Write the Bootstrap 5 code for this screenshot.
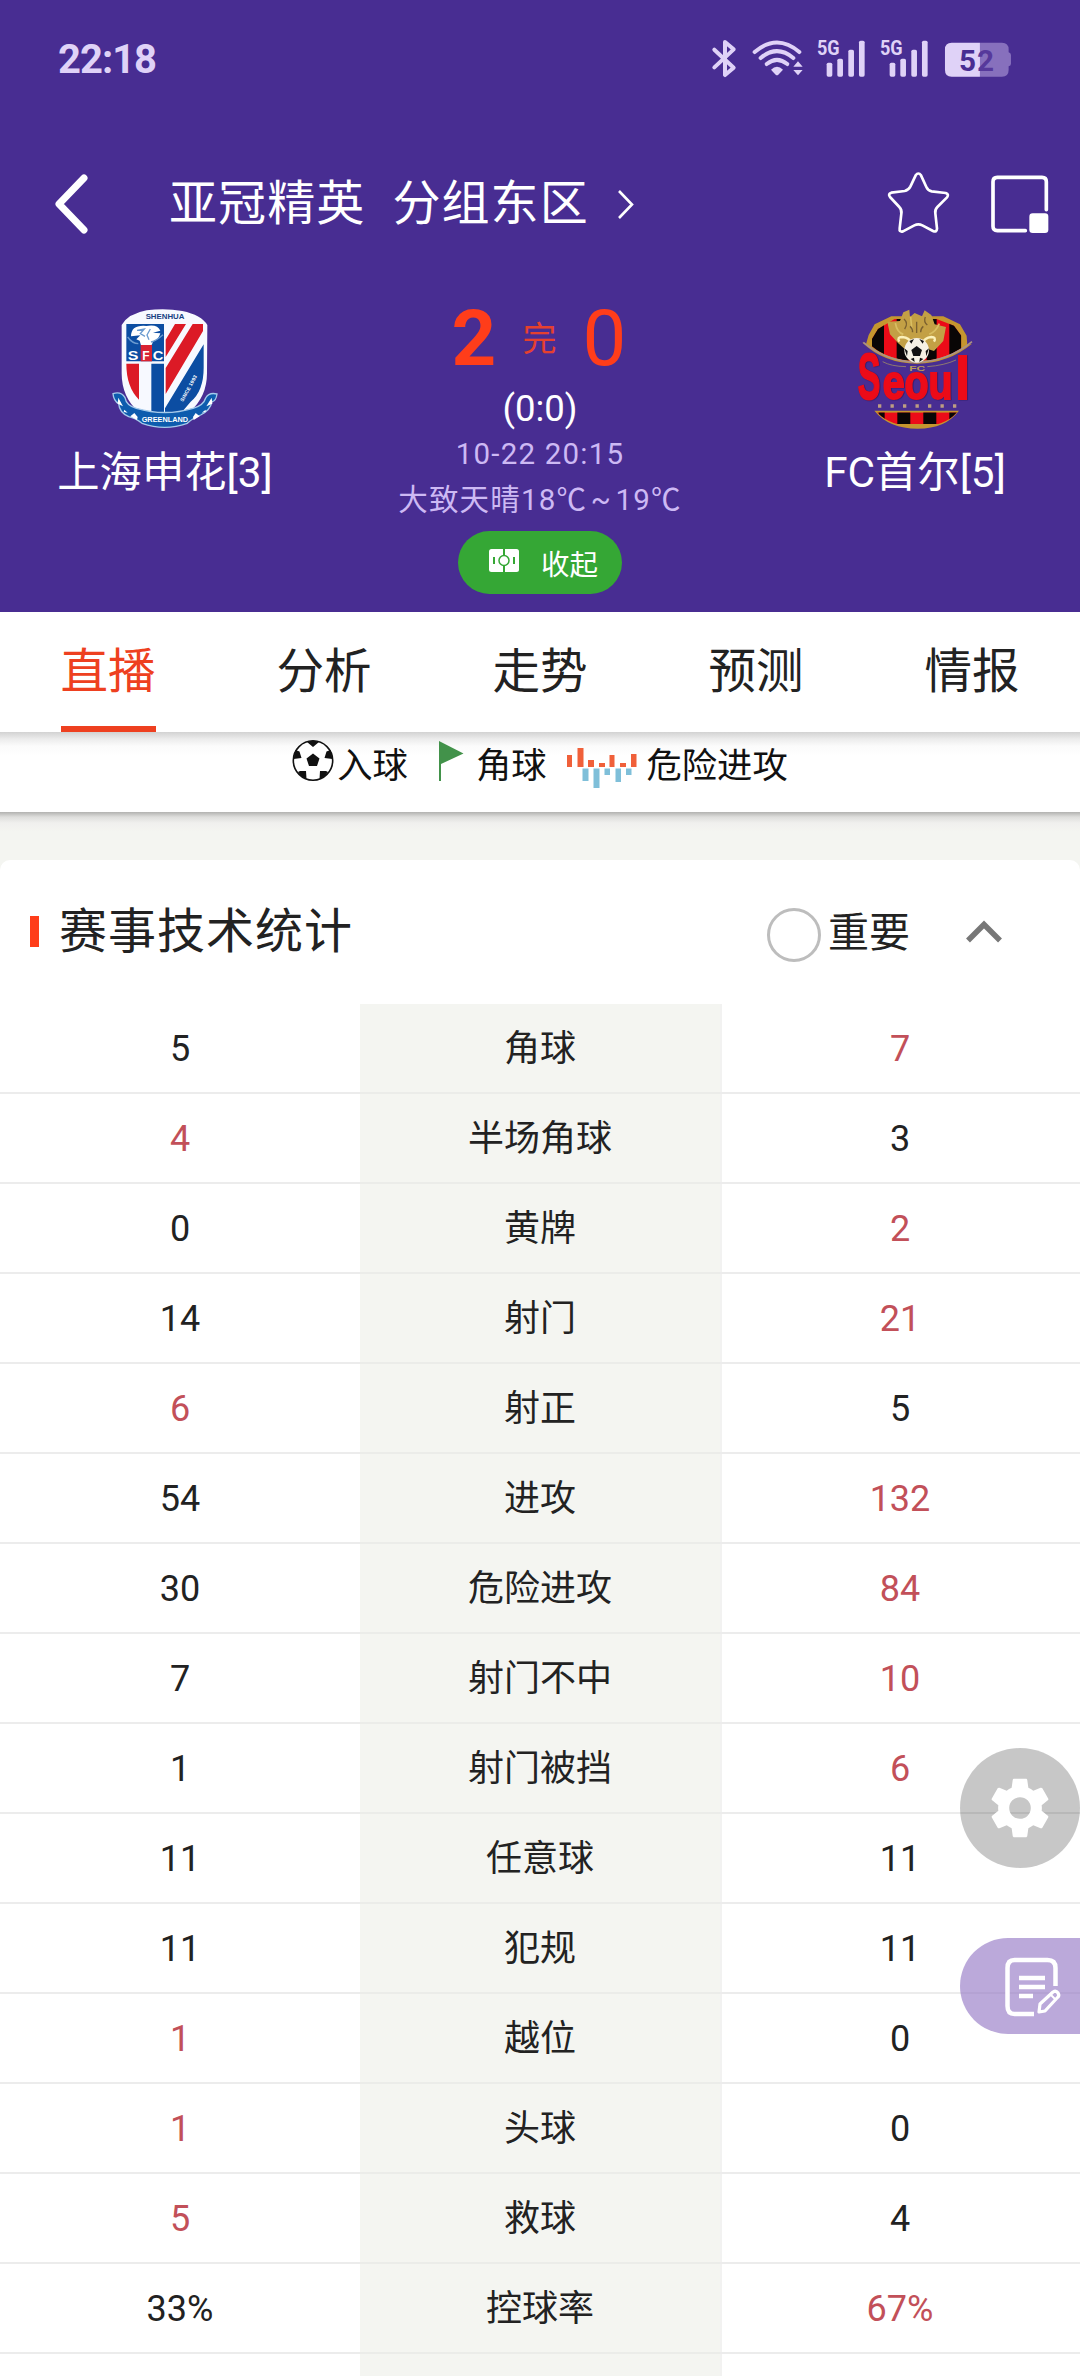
<!DOCTYPE html>
<html lang="zh-CN">
<head>
    <meta charset="UTF-8">
    <meta name="viewport" content="width=device-width, initial-scale=1.0">
    <title>上海申花 - FC首尔</title>
    <link href="https://cdn.jsdelivr.net/npm/bootstrap@5.3.0/dist/css/bootstrap.min.css" rel="stylesheet">
    <style>
        body { font-family: Roboto, "Noto Sans CJK SC", sans-serif; color: #222; background: #fff; width: 1080px; height: 2376px; }
        svg { display: block; flex: none; overflow: visible; }

        .match-header { background: #482d92; height: 612px; }
        .status-bar { height: 120px; padding: 38px 66px 0 58px; color: #dfd2f7; }
        .clock { font-size: 40px; line-height: 43px; font-weight: 700; letter-spacing: -1px; }
        .title-bar { height: 170px; padding: 48px 26px 0 55px; }
        .league { font-size: 48px; line-height: 72px; letter-spacing: 1.1px; margin-left: 78px; gap: 27px; }
        .pip-icon { margin-left: 36px; }
        .team { width: 330px; padding-top: 19px; }
        .team-name { font-size: 42.3px; line-height: 60px; margin-top: 14px; }
        .score-line { height: 96px; color: #ff3d1a; font-size: 78px; line-height: 98px; }
        .score-line b { width: 46px; }
        .score-line i { width: 46px; font-style: normal; }
        .state { font-size: 34px; color: #e5402f; margin: 0 26px 0 25px; }
        .half { font-size: 36.5px; line-height: 45px; }
        .meta { font-size: 29.5px; color: #cdb9f4; letter-spacing: 1.2px; line-height: 46px; white-space: nowrap; }
        .weather { word-spacing: -5px; }
        .fold-btn { width: 164px; height: 63px; background: #35a735; font-size: 28.5px; line-height: 63px; margin-top: 8px; padding: 6px 0 0 31px; gap: 22px; }
        .fold-btn svg { margin-top: -10px; }

        .tab-item { font-size: 47.5px; line-height: 120px; height: 120px; }
        .tab-item span { display: inline-block; height: 120px; }
        .tab-item.current span { color: #ee4020; border-bottom: 6px solid #ee4020; }
        .tabs-row { height: 120px; }
        .legend { height: 80px; font-size: 35.3px; line-height: 69px; color: #111; background: linear-gradient(#d2d2d2 0, #ececec 7px, #fbfbfb 14px, #fff 24px); }
        .ball-icon { margin-right: 3px; }
        .flag-icon { margin: 0 12px 0 31px; }
        .bars-icon { margin: 0 9px 0 19px; }
        .spacer { height: 48px; background: linear-gradient(#b2b2b0 0, #dededc 5px, #f0f0ee 11px, #f4f5f1 20px); }

        .stats-wrap { background: #f4f5f1; }
        .stats-panel { background: #fff; border-radius: 10px 10px 0 0; }
        .stats-head { height: 144px; padding: 0 77px 3px 30px; }
        .red-bar { width: 9px; height: 31px; background: #ff3d1a; margin-top: 2px; }
        .stats-title { font-size: 48px; letter-spacing: 1px; margin: 3px 0 0 20px; }
        .radio-ring { width: 54px; height: 54px; border: 3px solid #bdbdbd; margin-right: 7px; }
        .filter-label { font-size: 41px; margin: 7px 55px 0 0; }
        .stat-line { height: 90px; font-size: 36px; line-height: 90px; text-align: center; }
        .stat-line > div { height: 90px; box-shadow: inset 0 -2px #ececec; }
        .stat-line .stat-name { background: #f4f5f1; box-shadow: inset 0 -2px #ebece9, 2px 0 #f2f2f1; }
        .win { color: #c25059; }

        .fab { right: 0; width: 120px; }
        .fab-gear { top: 1748px; height: 120px; background: rgba(0, 0, 0, .22); }
        .fab-note { top: 1938px; height: 96px; background: rgba(146, 116, 195, .62); border-radius: 48px 0 0 48px; }
        .fab-note svg { margin-left: 44px; }
        .wordmark { filter: drop-shadow(2px 1px 0 #2b1c64); }
    </style>
</head>
<body class="position-relative overflow-hidden">

    <header class="match-header text-white">
        <!-- Phone status bar -->
        <div class="status-bar d-flex justify-content-between align-items-start">
            <div class="clock">22:18</div>
            <svg width="303.3" height="41.7" viewBox="90 55 910 125" fill="#dfd2f7" font-family="Roboto" font-weight="700">
                <path d="M100 90l58 54-26 22V67l26 22-58 54" fill="none" stroke="#dfd2f7" stroke-width="12" stroke-linejoin="round" stroke-linecap="round"/>
                <g fill="none" stroke="#dfd2f7" stroke-width="12" stroke-linecap="round">
                    <path d="M221 97q67-57 134 0"/>
                    <path d="M239 115q49-41 98 0"/>
                    <path d="M257 133q31-25 62 0"/>
                </g>
                <path d="M270 150q18-18 36 0l-14 15q-4 4-8 0z"/>
                <path d="M337 141l14-16 14 16zM337 151l14 16 14-16z"/>
                <g id="sim">
                    <text x="408" y="107" font-size="62" textLength="68" lengthAdjust="spacingAndGlyphs">5G</text>
                    <rect x="437" y="129" width="17" height="42" rx="5"/>
                    <rect x="469" y="117" width="17" height="54" rx="5"/>
                    <rect x="502" y="90" width="17" height="81" rx="5"/>
                    <rect x="534" y="63" width="17" height="108" rx="5"/>
                </g>
                <use href="#sim" x="189"/>
                <path d="M897 69h66q20 0 20 20v9q7 2 7 8v26q0 6-7 8v11q0 20-20 20h-66z" fill="#8770bd"/>
                <path d="M897 69h-85q-20 0-20 20v62q0 20 20 20h85z"/>
                <text x="834" y="153" font-size="89" fill="#482d92">5</text>
                <text x="888" y="153" font-size="89" fill="#56399b">2</text>
            </svg>
        </div>

        <!-- League title -->
        <div class="title-bar d-flex align-items-start">
            <svg width="36" height="72" viewBox="0 0 36 72"><path d="M29 10L4 36l25 26" fill="none" stroke="#fff" stroke-width="7" stroke-linecap="round" stroke-linejoin="round"/></svg>
            <div class="league d-flex"><span>亚冠精英</span><span>分组东区</span></div>
            <svg class="ms-4" width="26" height="72" viewBox="0 0 26 72"><path d="M6 23l13 13.500L6 50" fill="none" stroke="#fff" stroke-width="2.600"/></svg>
            <svg class="ms-auto" width="66.700" height="66.700" viewBox="610 443 200 200"><path d="M702 465q8-11 16 0l16 35q5 11 16 13l42 5q11 4 4 13l-29 29q-8 8-6 19l5 46q-1 12-12 7l-32-17q-12-6-24 0l-34 18q-12 3-10-9l5-44q2-12-6-20l-28-30q-7-9 4-13l40-5q11-2 17-13z" fill="none" stroke="#fff" stroke-width="8" stroke-linejoin="round"/></svg>
            <svg class="pip-icon" width="66" height="66.700" viewBox="920 443 198 200"><path d="M1095 568v-84q0-13-13-13H948q-13 0-13 13v134q0 13 13 13h84" fill="none" stroke="#fff" stroke-width="11" stroke-linecap="round"/><rect x="1044" y="579" width="57" height="59" rx="10" fill="#fff"/></svg>
        </div>

        <!-- Teams and score -->
        <div class="d-flex justify-content-between">
            <div class="team d-flex flex-column align-items-center">
                <svg width="106" height="120" viewBox="215 88 318 360" font-family="Liberation Sans" font-weight="700">
                    <path d="M244 136q20-34 75-44 56-7 107 2 57 12 75 42l-1 145q0 70-52 116l-75 40-76-38q-53-45-53-118z" fill="#f7f9ff"/>
                    <path d="M258 133h113v112H258z" fill="#0c4da2"/>
                    <path d="M272 170q0-35 46-31 34-6 42 14l-22 6 22 2q-6 22-22 24-4 20-20 18l-16-6-4-14-10-4 12-12z" fill="#fff"/>
                    <path d="M290 152l22-4-12 14 14 8M330 148l-10 18 6 14M262 172q14 20 32 20M368 165q-20 18-36 22" fill="none" stroke="#6b9bd0" stroke-width="4"/>
                    <path d="M301 196h34v49h-34z" fill="#d92332"/>
                    <g fill="#fff" font-size="36">
                        <text x="262" y="240" textLength="32" lengthAdjust="spacingAndGlyphs">S</text>
                        <text x="306" y="240">F</text>
                        <text x="337" y="240" textLength="32" lengthAdjust="spacingAndGlyphs">C</text>
                    </g>
                    <path d="M258 252h38v108q-38-38-38-108zM404 133h33l-61 99v-52zM457 133h31v21L376 343v-78z" fill="#dc1a26"/>
                    <path d="M333 252h38v152h-38zM490 194v70q0 70-39 102l-28 33h-49v-13z" fill="#0c4da2"/>
                    <text x="316" y="119" font-size="21" fill="#173f83" textLength="116" lengthAdjust="spacingAndGlyphs">SHENHUA</text>
                    <text transform="translate(428 367) rotate(-61)" font-size="15" fill="#fff" textLength="88">SINCE 1993</text>
                    <path d="M218 342q24-8 36 12 4 24 34 32 86 25 170 0 32-9 38-31 10-18 34-12-3 22-15 23-5 26-34 40-25 10-40 25-68 24-136 0-20-16-40-20-28-12-30-39-15-8-17-30z" fill="#0d5cae" stroke="#a5caeb" stroke-width="4"/>
                    <path d="M234 354l14 26-16-8zM252 390l10 9-12-2zM270 410l12-10 10 12-2 9zM514 354l-16 26 18-8zM496 390l-12 9 12-2zM478 410l-12-10-8 12 2 9z" fill="#fff"/>
                    <text x="304" y="428" font-size="24" fill="#fff" textLength="139" lengthAdjust="spacingAndGlyphs">GREENLAND</text>
                </svg>
                <div class="team-name">上海申花[3]</div>
            </div>

            <div class="d-flex flex-column align-items-center">
                <div class="score-line d-flex"><b>2</b><span class="state">完</span><i>0</i></div>
                <div class="half">(0:0)</div>
                <div class="meta">10-22 20:15</div>
                <div class="meta weather">大致天晴18℃ ~ 19℃</div>
                <div class="fold-btn rounded-pill d-flex align-items-center">
                    <svg width="30" height="24" viewBox="0 0 30 24"><rect width="30" height="23" rx="2.500" fill="#fff"/><g fill="none" stroke="#35a735" stroke-width="1.500"><circle cx="15" cy="11.500" r="5"/><path d="M15 0v6.500M15 16.500V23M5 8v7M25 8v7" stroke-width="2"/></g></svg>
                    <span>收起</span>
                </div>
            </div>

            <div class="team d-flex flex-column align-items-center">
                <svg width="117.300" height="120" viewBox="222 88 352 360" font-weight="700">
                    <clipPath id="top"><path d="M270 178l18-30 50-30h126l52 20 22 30v38q-60 40-138 38-80-2-130-44z"/></clipPath>
                    <clipPath id="foot"><path d="M285 398h240q-38 44-118 44-80 0-122-44z"/></clipPath>
                    <path d="M252 194l8-28 18-32 50-24h156l50 24 20 34 2 28 14-4q-70 58-164 60-100 0-166-64z" fill="#c5962f"/>
                    <g clip-path="url(#top)"><path d="M220 100h350v160H220z" fill="#ec0b18"/><path d="M260 100h46v160h-46zM344 100h36v160h-36zM434 100h30v160h-30zM502 100h38v160h-38z" fill="#090606"/></g>
                    <path d="M244 188q70 58 162 60 94-4 164-62" fill="none" stroke="#aa9287" stroke-width="5"/>
                    <path d="M316 126l38-2 10-26 18-8 2 22 14-12 22 10 8-18 20 14 10 28 34 8-8 42-28 30-26-8-20 8-42-6-20-18-24-26z" fill="#c3a045"/>
                    <path d="M340 130q5 28 24 34M386 112l4 42M472 132q-10 24-30 32" fill="none" stroke="#d9be62" stroke-width="5"/>
                    <path d="M352 186q-8-14 8-14 24 2 28 20M456 186q8-14-8-14-20 2-28 20" fill="none" stroke="#fbf0b8" stroke-width="7"/>
                    <path d="M366 118q14 12 2 30M430 112q-6 14 6 24M404 126v34M384 140q8 6 8 18M424 140q-8 6-8 18" fill="none" stroke="#7b6030" stroke-width="4"/>
                    <circle cx="404" cy="212" r="37" fill="#f6f1e4"/>
                    <path d="M404 199l16 12-6 18h-20l-6-18zM382 184l14-6-8 14zM426 184l-14-6 10 14zM367 206l10 8-2 16zM441 206l-10 8 2 16zM386 238l10-4 2 13zM424 238l-10-4-2 13z" fill="#111"/>
                    <path d="M302 246q25 14 70 15M436 261q52-4 86-20" fill="none" stroke="#8e786f" stroke-width="3"/>
                    <text x="382" y="274" font-size="24" fill="#b99a57" font-family="Liberation Sans" textLength="48" lengthAdjust="spacingAndGlyphs">FC</text>
                    <g class="wordmark" font-family="Liberation Sans" fill="#ec0b18" stroke="#ec0b18" stroke-width="6">
                        <text x="227" y="357" font-size="194" textLength="68" lengthAdjust="spacingAndGlyphs">S</text>
                        <text x="302" y="357" font-size="146" textLength="210" lengthAdjust="spacingAndGlyphs">eou</text>
                        <text x="520" y="357" font-size="178" textLength="44" lengthAdjust="spacingAndGlyphs">l</text>
                    </g>
                    <path d="M288 379h236" stroke="#bd9d83" stroke-width="11" stroke-dasharray="10 27.500"/>
                    <path d="M277 393h254q-40 54-124 54-86 0-130-54z" fill="#c5962f"/>
                    <g clip-path="url(#foot)"><path d="M280 398h250v35H280z" fill="#ec0b18"/><path d="M290 398h18v35h-18zM346 398h39v35h-39zM424 398h39v35h-39zM502 398h28v35h-28z" fill="#090606"/></g>
                </svg>
                <div class="team-name">FC首尔[5]</div>
            </div>
        </div>
    </header>

    <!-- Tabs -->
    <nav class="tabs-row row g-0 text-center bg-white">
        <div class="tab-item current col"><span>直播</span></div>
        <div class="tab-item col"><span>分析</span></div>
        <div class="tab-item col"><span>走势</span></div>
        <div class="tab-item col"><span>预测</span></div>
        <div class="tab-item col"><span>情报</span></div>
    </nav>

    <!-- Chart legend -->
    <div class="legend d-flex justify-content-center align-items-start">
        <svg class="ball-icon" width="42" height="50" viewBox="0 0 42 50"><circle cx="21" cy="28.500" r="19.700" fill="#fff" stroke="#111" stroke-width="1.600"/><path d="M21 21.500l6.500 5-2.500 7.500h-8l-2.500-7.500zM15 10q6-2.500 12 0l-6 5zM1.500 27l2-9 4 1.500 2 6.500zM40.500 27l-2-9-4 1.500-2 6.500zM6 40l2-1h6l.5 8q-5-1.500-8.500-7zM36 40l-2-1h-6l-.5 8q5-1.500 8.500-7z" fill="#111"/></svg>
        <span>入球</span>
        <svg class="flag-icon" width="25" height="50" viewBox="0 0 25 50"><path d="M0 9l24.500 12.500L2 32v17H0z" fill="#42924a"/></svg>
        <span>角球</span>
        <svg class="bars-icon" width="72" height="56" viewBox="0 0 72 56">
            <path d="M1 23h5v12H1zM11.500 16h6v19h-6zM22 28h6v7h-6zM33 31h6v4h-6zM43.500 23h5v12h-5zM54 31h6v4h-6zM65 22h5.500v13H65z" fill="#f0603a"/>
            <path d="M16.500 36.500h6V49h-6zM27.500 36.500h6V56h-6zM38.500 36.500h5.500V43h-5.500zM49.500 36.500h5.500V50h-5.500zM60 36.500h5.500V43H60z" fill="#7fbfd9"/>
        </svg>
        <span>危险进攻</span>
    </div>
    <div class="spacer"></div>

    <!-- Technical statistics -->
    <section class="stats-wrap">
        <div class="stats-panel">
            <div class="stats-head d-flex align-items-center">
                <div class="red-bar"></div>
                <div class="stats-title">赛事技术统计</div>
                <div class="radio-ring rounded-circle ms-auto mt-2"></div>
                <div class="filter-label">重要</div>
                <svg width="38" height="28" viewBox="0 0 38 28"><path d="M3 23.500L19 7.500l16 16" fill="none" stroke="#777" stroke-width="5.500"/></svg>
            </div>
            <div id="stats"></div>
        </div>
    </section>

    <!-- Floating buttons -->
    <div class="fab fab-gear position-absolute rounded-circle d-flex justify-content-center align-items-center">
        <svg width="70" height="70" viewBox="0 0 24 24" fill="#fff"><path d="M19.430 12.980c.04-.32.07-.64.07-.98s-.03-.66-.07-.98l2.110-1.650c.19-.15.24-.42.12-.64l-2-3.460c-.12-.22-.39-.3-.61-.22l-2.490 1c-.52-.4-1.080-.73-1.690-.98l-.38-2.650C14.460 2.180 14.250 2 14 2h-4c-.25 0-.46.18-.49.42l-.38 2.650c-.61.25-1.170.59-1.690.98l-2.490-1c-.23-.09-.49 0-.61.22l-2 3.460c-.13.22-.07.49.12.64l2.110 1.650c-.04.32-.07.65-.07.98s.03.66.07.98l-2.110 1.650c-.19.15-.24.42-.12.64l2 3.460c.12.22.39.3.61.22l2.490-1c.52.4 1.080.73 1.690.98l.38 2.650c.03.24.24.42.49.42h4c.25 0 .46-.18.49-.42l.38-2.650c.61-.25 1.170-.59 1.690-.98l2.490 1c.23.09.49 0 .61-.22l2-3.460c.12-.22.07-.49-.12-.64zM12 15.700a3.700 3.700 0 1 1 0-7.400 3.700 3.700 0 0 1 0 7.400z"/></svg>
    </div>
    <div class="fab fab-note position-absolute d-flex align-items-center">
        <svg width="60" height="60" viewBox="0 0 60 60" fill="none" stroke="#fff">
            <path d="M51.500 30V12q0-8-8-8h-33q-7 0-7 8v38q0 8 7 8H30" stroke-width="4.500"/>
            <path d="M15 22h26M15 31h26M15 40h14" stroke-width="4.500"/>
            <path d="M35 56l1-8 13-12q3-2 5 1 2 3-1 5L41 55z" stroke-width="3.200" stroke-linejoin="round"/>
            <path d="M46 38l6 6" stroke-width="2"/>
        </svg>
    </div>

    <script src="https://cdn.jsdelivr.net/npm/bootstrap@5.3.0/dist/js/bootstrap.bundle.min.js"></script>
    <script>
        // home value, label, away value
        const stats = [
            ["5", "角球", "7"],
            ["4", "半场角球", "3"],
            ["0", "黄牌", "2"],
            ["14", "射门", "21"],
            ["6", "射正", "5"],
            ["54", "进攻", "132"],
            ["30", "危险进攻", "84"],
            ["7", "射门不中", "10"],
            ["1", "射门被挡", "6"],
            ["11", "任意球", "11"],
            ["11", "犯规", "11"],
            ["1", "越位", "0"],
            ["1", "头球", "0"],
            ["5", "救球", "4"],
            ["33%", "控球率", "67%"],
            ["", "", ""]
        ];

        // the higher value of each pair is shown in red
        document.getElementById("stats").innerHTML = stats.map(([home, name, away]) => {
            const diff = parseInt(home) - parseInt(away);
            return `<div class="stat-line row g-0">
                <div class="col-4 ${diff > 0 ? "win" : ""}">${home}</div>
                <div class="col-4 stat-name">${name}</div>
                <div class="col-4 ${diff < 0 ? "win" : ""}">${away}</div>
            </div>`;
        }).join("");
    </script>
</body>
</html>
